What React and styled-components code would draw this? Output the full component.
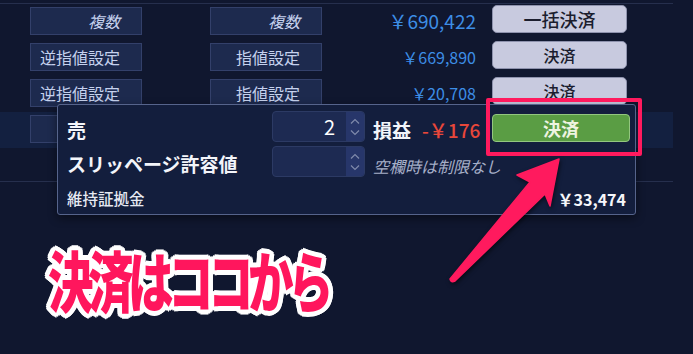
import styled, { createGlobalStyle } from 'styled-components'

const GlobalStyle = createGlobalStyle`
  html, body {
    margin: 0;
    padding: 0;
    background: #10172f;
  }
  body {
    font-family: 'Noto Sans CJK JP', 'Noto Sans', sans-serif;
  }
`

const rows = [
  { first: '複数', second: '複数', italic: true, amount: '￥690,422', action: '一括決済', big: true },
  { first: '逆指値設定', second: '指値設定', amount: '￥669,890', action: '決済' },
  { first: '逆指値設定', second: '指値設定', amount: '￥20,708', action: '決済' },
  { first: '', second: '', active: true }
]

const CALLOUT = '決済はココから'

// offsets for the white rim copies (x is widened since the callout is squeezed)
const rim = []
for (const [r, n] of [[2.4, 8], [4.6, 16]]) {
  for (let i = 0; i < n; i++) {
    const a = (i / n) * Math.PI * 2
    rim.push([(Math.cos(a) * r * 1.45).toFixed(2), (Math.sin(a) * r).toFixed(2)])
  }
}

function Chevrons () {
  return (
    <svg width='12' height='24' viewBox='0 0 12 24'>
      <path d='M2 8.5 L6 4.5 L10 8.5' fill='none' stroke='#7f8aab' strokeWidth='1.2' />
      <path d='M2 15.5 L6 19.5 L10 15.5' fill='none' stroke='#7f8aab' strokeWidth='1.2' />
    </svg>
  )
}

export default function App () {
  return (
    <>
      <GlobalStyle />
      <Page>
        <Table>
          {rows.map((row, i) => (
            <Row key={i} $active={row.active}>
              <Field $italic={row.italic}>{row.first}</Field>
              <Field $italic={row.italic} $second>{row.second}</Field>
              {row.amount && <Amount $big={row.big}>{row.amount}</Amount>}
              {row.action && <RowButton $big={row.big}>{row.action}</RowButton>}
            </Row>
          ))}
        </Table>

        <Popup>
          <Label $shift={6}>売</Label>
          <NumberInput>
            <InputValue>2</InputValue>
            <Spinner><Chevrons /></Spinner>
          </NumberInput>
          <ValueCell>
            <ProfitLabel>損益</ProfitLabel>
            <Loss>-￥176</Loss>
          </ValueCell>
          <SettleButton>決済</SettleButton>

          <Label $shift={5}>スリッページ許容値</Label>
          <NumberInput>
            <InputValue />
            <Spinner><Chevrons /></Spinner>
          </NumberInput>
          <Hint>空欄時は制限なし</Hint>

          <MarginLabel>維持証拠金</MarginLabel>
          <MarginValue>￥33,474</MarginValue>
        </Popup>

        <Highlight />
        <Arrow width='130' height='140' viewBox='440 150 130 140'>
          <path
            d='M559 159 L517 175 L530 182 L450 279 Q451 283 455 281 L545 194 L550 206 Z'
            fill='#ff1a5e'
            stroke='#ff1a5e'
            strokeWidth='1.5'
            strokeLinejoin='round'
          />
        </Arrow>
        <Callout>
          {rim.map(([x, y], i) => (
            <CalloutLayer key={i} $rim aria-hidden='true' style={{ transform: `translate(${x}px, ${y}px)` }}>
              {CALLOUT}
            </CalloutLayer>
          ))}
          <CalloutLayer>{CALLOUT}</CalloutLayer>
        </Callout>
      </Page>
    </>
  )
}

const Page = styled.div`
  position: relative;
  width: 693px;
  height: 354px;
  overflow: hidden;
  box-sizing: border-box;
  padding-top: 3px;
  background: #10172f;
`

const Table = styled.div`
  width: 673px;
  border-top: 1px solid #262f4d;
  border-bottom: 1px solid #262f4d;
  padding-bottom: 33px;
`

const Row = styled.div`
  display: flex;
  align-items: flex-start;
  height: 36px;
  padding-left: 30px;
  background: ${p => p.$active ? '#132040' : 'transparent'};
`

const Field = styled.div`
  width: 112px;
  height: 28px;
  margin-top: 3px;
  margin-left: ${p => p.$second ? '68px' : '0'};
  box-sizing: border-box;
  background: #1d2a4e;
  border: 1px solid #33406a;
  color: #c6d2ee;
  font-size: 16px;
  font-style: ${p => p.$italic ? 'italic' : 'normal'};
  line-height: 26px;
  text-align: right;
  padding-right: 21px;
`

const Amount = styled.div`
  width: 154px;
  height: 34px;
  line-height: 34px;
  text-align: right;
  color: #3d8ee6;
  font-size: ${p => p.$big ? '19px' : '16px'};
`

const RowButton = styled.div`
  width: 135px;
  height: 28px;
  margin-top: 1px;
  margin-left: 16px;
  box-sizing: border-box;
  background: #c8cadf;
  border: 1px solid #8e92ad;
  border-radius: 5px;
  color: #1b1d2e;
  font-size: ${p => p.$big ? '18px' : '16px'};
  font-weight: 500;
  line-height: 26px;
  text-align: center;
`

const Popup = styled.div`
  position: absolute;
  left: 57px;
  top: 104px;
  width: 579px;
  height: 111px;
  box-sizing: border-box;
  display: grid;
  grid-template-columns: 205px 93px 127px 138px;
  grid-template-rows: 31px 31px 1fr;
  row-gap: 4px;
  align-items: center;
  padding: 6px 5px 0 9px;
  background: #131e3d;
  border: 1px solid #56648c;
  border-radius: 3px;
  box-shadow: 0 3px 10px rgba(0, 0, 0, 0.45);
  color: #f3f5fa;
`

const Label = styled.div`
  font-size: 19px;
  font-weight: 700;
  line-height: 24px;
  padding-top: ${p => p.$shift}px;
  white-space: nowrap;
`

const NumberInput = styled.div`
  display: flex;
  align-items: stretch;
  height: 31px;
  box-sizing: border-box;
  background: #1d2a52;
  border: 1px solid #2c3a64;
  border-radius: 4px;
  overflow: hidden;
`

const InputValue = styled.div`
  flex: 1;
  text-align: right;
  padding-right: 11px;
  font-size: 20px;
  line-height: 29px;
  color: #ffffff;
`

const Spinner = styled.div`
  width: 18px;
  display: flex;
  align-items: center;
  justify-content: center;
  background: #27366a;
`

const ValueCell = styled.div`
  display: flex;
  align-items: baseline;
  gap: 11px;
  padding-left: 8px;
  padding-top: 6px;
  white-space: nowrap;
`

const ProfitLabel = styled.span`
  font-size: 19px;
  font-weight: 700;
`

const Loss = styled.span`
  font-size: 19px;
  font-weight: 500;
  color: #e8473a;
`

const SettleButton = styled.div`
  align-self: start;
  margin-top: 3px;
  height: 28px;
  box-sizing: border-box;
  background: #5a9d44;
  border: 1px solid #93c77f;
  border-radius: 4px;
  color: #eef4e0;
  font-size: 18px;
  font-weight: 700;
  line-height: 26px;
  text-align: center;
`

const Hint = styled.div`
  grid-column: 3 / span 2;
  padding-left: 8px;
  padding-top: 8px;
  font-size: 16px;
  font-style: italic;
  color: #a6afc8;
`

const MarginLabel = styled.div`
  grid-column: 1 / span 3;
  font-size: 15.5px;
  font-weight: 500;
  color: #e6e9f2;
`

const MarginValue = styled.div`
  text-align: right;
  padding-right: 4px;
  padding-top: 2px;
  font-size: 16px;
  font-weight: 700;
  color: #f6f7fb;
`

const Highlight = styled.div`
  position: absolute;
  left: 486px;
  top: 98px;
  width: 156px;
  height: 58px;
  box-sizing: border-box;
  border: 4px solid #ff1a5e;
  border-radius: 2px;
`

const Arrow = styled.svg`
  position: absolute;
  left: 440px;
  top: 150px;
  overflow: visible;
  filter: drop-shadow(1px 2px 2px rgba(0, 0, 0, 0.55));
`

const Callout = styled.div`
  position: absolute;
  left: 48px;
  top: 245px;
  display: grid;
  font-size: 66px;
  font-weight: 900;
  line-height: 1;
  letter-spacing: -8px;
  white-space: nowrap;
  transform: scaleX(0.69);
  transform-origin: left top;
`

const CalloutLayer = styled.span`
  grid-area: 1 / 1;
  position: relative;
  z-index: ${p => p.$rim ? 0 : 1};
  color: ${p => p.$rim ? '#ffffff' : '#ff165d'};
`
